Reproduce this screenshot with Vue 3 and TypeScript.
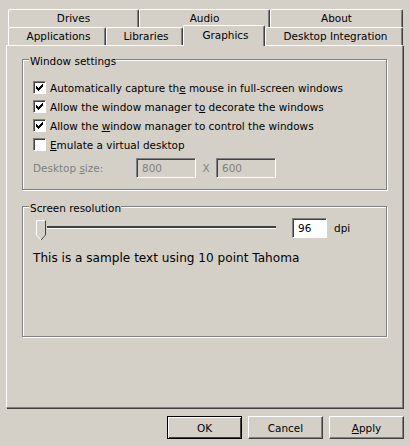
<script setup lang="ts">
type Tab = { label: string; active?: boolean; width: number }

const topTabs: Tab[] = [
  { label: 'Drives', width: 131 },
  { label: 'Audio', width: 131 },
  { label: 'About', width: 133 },
]

const bottomTabs: Tab[] = [
  { label: 'Applications', width: 98 },
  { label: 'Libraries', width: 77 },
  { label: 'Graphics', width: 82, active: true },
  { label: 'Desktop Integration', width: 138 },
]

const windowOptions = [
  { before: 'Automatically capture th', key: 'e', after: ' mouse in full-screen windows', checked: true },
  { before: 'Allow the window manager t', key: 'o', after: ' decorate the windows', checked: true },
  { before: 'Allow the ', key: 'w', after: 'indow manager to control the windows', checked: true },
  { before: '', key: 'E', after: 'mulate a virtual desktop', checked: false },
]
</script>

<template>
  <div class="dialog">
    <div class="tabs">
      <div class="tab-row tab-row--top">
        <div v-for="tab in topTabs" :key="tab.label" class="tab" :style="{ width: tab.width + 'px' }">{{ tab.label }}</div>
      </div>
      <div class="tab-row tab-row--bottom">
        <div
          v-for="tab in bottomTabs"
          :key="tab.label"
          class="tab"
          :class="{ 'tab--active': tab.active }"
          :style="{ width: tab.width + 'px' }"
        >
          {{ tab.label }}
        </div>
      </div>
    </div>

    <div class="panel">
      <section class="group group--window">
        <h4 class="group-title">Window settings</h4>
        <div v-for="opt in windowOptions" :key="opt.key" class="check-row">
          <span class="check">
            <svg v-if="opt.checked" width="7" height="7" viewBox="0 0 7 7" shape-rendering="crispEdges">
              <path d="M0 2 H1 V3 H2 V4 H3 V3 H4 V2 H5 V1 H6 V0 H7 V3 H6 V4 H5 V5 H4 V6 H3 V7 H2 V6 H1 V5 H0 Z" fill="#000" />
            </svg>
          </span>
          <span>{{ opt.before }}<u>{{ opt.key }}</u>{{ opt.after }}</span>
        </div>
        <div class="size-row">
          <span class="size-label">Desktop <u>s</u>ize:</span>
          <input class="field field--disabled" value="800" disabled />
          <span class="size-x">X</span>
          <input class="field field--disabled" value="600" disabled />
        </div>
      </section>

      <section class="group group--screen">
        <h4 class="group-title">Screen resolution</h4>
        <div class="slider-row">
          <div class="slider">
            <svg class="thumb" width="11" height="21" viewBox="0 0 11 21">
              <path d="M0.5 0.5 H9.5 V15 L5 20 L0.5 15 Z" fill="#d4d0c8" stroke="#fff" />
              <path d="M9.5 0.5 V15 L5 20" fill="none" stroke="#404040" />
            </svg>
            <div class="track"></div>
          </div>
          <input class="field field--dpi" value="96" />
          <span class="dpi">dpi</span>
        </div>
        <p class="sample">This is a sample text using 10 point Tahoma</p>
      </section>
    </div>

    <div class="actions">
      <button type="button" class="btn btn--default">OK</button>
      <button type="button" class="btn">Cancel</button>
      <button type="button" class="btn"><u>A</u>pply</button>
    </div>
  </div>
</template>

<style scoped>
.dialog {
  width: 410px;
  height: 446px;
  box-sizing: border-box;
  padding: 9px 6px 0 6px;
  background: #d4d0c8;
  font-family: "DejaVu Sans", "Liberation Sans", sans-serif;
  font-size: 10.45px;
  color: #000;
  overflow: hidden;
}

.tabs {
  height: 36px;
}

.tab-row {
  display: flex;
  height: 18px;
  padding-left: 2px;
}

.tab {
  box-sizing: border-box;
  height: 18px;
  padding-bottom: 2px;
  display: flex;
  align-items: center;
  justify-content: center;
  border-top: 1px solid #fff;
  border-left: 1px solid #fff;
  border-right: 1px solid #404040;
  box-shadow: inset -1px 0 0 #808080;
  border-radius: 2px 2px 0 0;
  position: relative;
}

.tab-row--bottom .tab {
  padding-left: 3px;
}

.tab-row--bottom .tab--active {
  height: 21px;
  margin-top: -2px;
  z-index: 2;
  background: #d4d0c8;
  padding-bottom: 3px;
}

.panel {
  width: 397px;
  height: 363px;
  box-sizing: border-box;
  padding: 13px 0 0 15px;
  border-top: 1px solid #fff;
  border-left: 1px solid #fff;
  border-right: 1px solid #808080;
  border-bottom: 1px solid #808080;
  box-shadow: 1px 1px 0 #404040;
}

.group {
  position: relative;
  box-sizing: border-box;
  width: 365px;
  height: 131px;
  border: 1px solid #808080;
  box-shadow: 1px 1px 0 #fff, inset 1px 1px 0 #fff;
}

.group--window {
  padding: 18px 0 0 10px;
}

.group--screen {
  margin-top: 16px;
  padding: 11px 0 0 10px;
}

.group-title {
  position: absolute;
  top: -6px;
  left: 6px;
  margin: 0;
  padding: 0 0 0 1px;
  background: #d4d0c8;
  font-size: 10.45px;
  font-weight: 400;
  line-height: 14px;
}

.check-row {
  display: flex;
  align-items: center;
  gap: 4px;
  height: 19px;
}

.check {
  box-sizing: border-box;
  width: 13px;
  height: 13px;
  background: #fff;
  border-top: 1px solid #808080;
  border-left: 1px solid #808080;
  border-right: 1px solid #fff;
  border-bottom: 1px solid #fff;
  box-shadow: inset 1px 1px 0 #404040;
  display: flex;
  align-items: center;
  justify-content: center;
}

.size-row {
  display: flex;
  align-items: center;
  margin-top: 4px;
  color: #808080;
}

.size-label {
  width: 103px;
}

.size-x {
  width: 20px;
  text-align: center;
}

.field {
  box-sizing: border-box;
  height: 20px;
  font: inherit;
  padding: 0 0 0 5px;
  margin: 0;
  outline: none;
  border-top: 1px solid #808080;
  border-left: 1px solid #808080;
  border-right: 1px solid #fff;
  border-bottom: 1px solid #fff;
  box-shadow: inset 1px 1px 0 #404040;
}

.field--disabled {
  width: 60px;
  background: #d4d0c8;
  color: #808080;
}

.field--dpi {
  width: 35px;
  background: #fff;
  color: #000;
  margin-left: 16px;
}

.dpi {
  margin-left: 7px;
}

.slider-row {
  display: flex;
  align-items: center;
  height: 20px;
}

.slider {
  display: flex;
  align-items: flex-start;
  width: 240px;
  height: 20px;
  margin-left: 3px;
}

.thumb {
  flex: none;
  margin-top: 2px;
}

.track {
  flex: 1;
  height: 3px;
  box-sizing: border-box;
  margin-top: 8px;
  border-top: 2px solid #404040;
  border-bottom: 1px solid #fff;
}

.sample {
  margin: 12px 0 0 0;
  font-size: 12.1px;
  line-height: 16px;
}

.actions {
  display: flex;
  justify-content: flex-end;
  gap: 6px;
  margin-top: 8px;
}

.btn {
  box-sizing: border-box;
  width: 75px;
  height: 23px;
  padding: 0;
  font: inherit;
  color: #000;
  background: #d4d0c8;
  border-top: 1px solid #fff;
  border-left: 1px solid #fff;
  border-right: 1px solid #404040;
  border-bottom: 1px solid #404040;
  box-shadow: inset -1px -1px 0 #808080;
}

.btn--default {
  border: 1px solid #000;
  box-shadow: inset 1px 1px 0 #fff, inset -1px -1px 0 #404040;
}
</style>

<style>
html,
body {
  margin: 0;
  background: #d4d0c8;
}
</style>
